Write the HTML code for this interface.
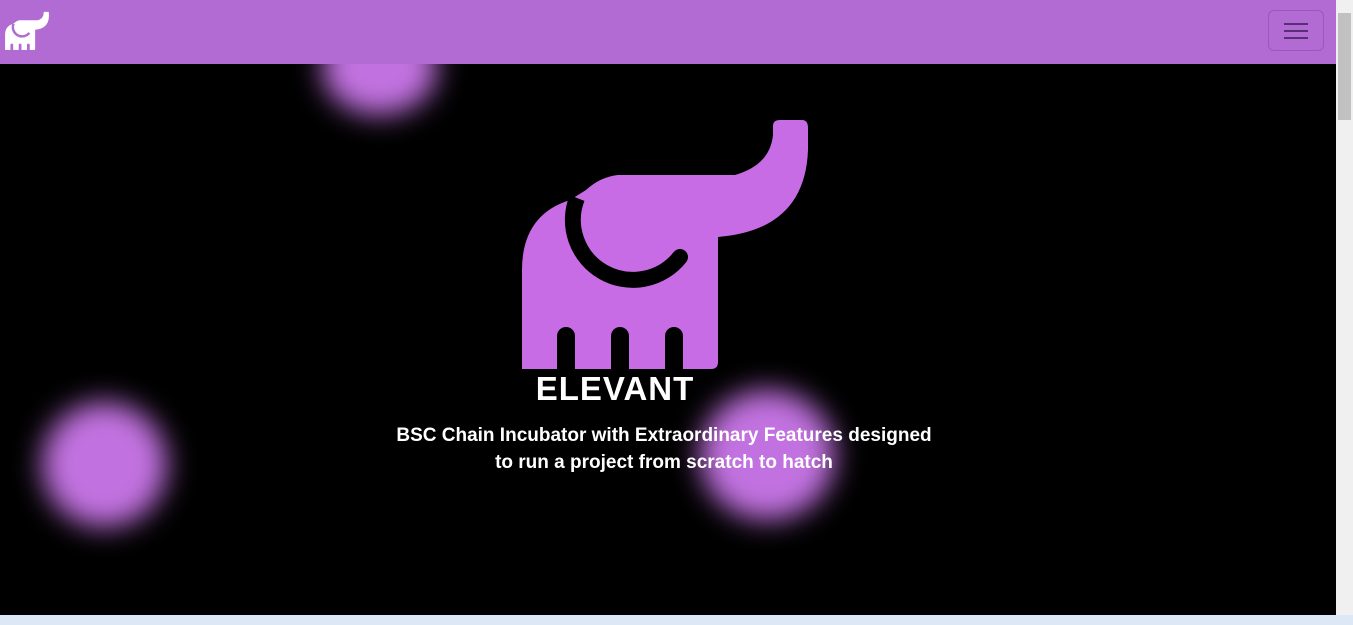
<!DOCTYPE html>
<html><head><style>
html,body{margin:0;padding:0;width:1353px;height:625px;overflow:hidden;background:#000;font-family:"Liberation Sans",sans-serif}
.nav{position:absolute;left:0;top:0;width:1336px;height:64px;background:#b36bd4;z-index:3}
.tog{position:absolute;left:1268px;top:10px;width:56px;height:41px;border:1px solid rgba(80,30,110,.25);border-radius:6px;box-sizing:border-box}
.tog i{position:absolute;left:15px;width:24px;height:2px;background:#5a2d78}
.glow{position:absolute;border-radius:50%;background:#c272e0;filter:blur(14px);z-index:1}
.sb{position:absolute;left:1336px;top:0;width:17px;height:615px;background:#f0f0f0}
.th{position:absolute;left:2px;top:13px;width:13px;height:107px;background:#c1c1c1}
.task{position:absolute;left:0;top:615px;width:1353px;height:10px;background:#dce8f5}
h1{position:absolute;left:0;width:1230px;top:370px;margin:0;text-align:center;color:#fff;font-size:33px;font-weight:900;letter-spacing:1px;z-index:2}
p{position:absolute;left:0;width:1328px;top:422px;margin:0;text-align:center;color:#fff;font-size:19px;font-weight:bold;line-height:27px;z-index:2}
</style></head><body>
<div class="glow" style="left:322px;top:20px;width:115px;height:95px"></div>
<div class="glow" style="left:42px;top:402px;width:125px;height:125px"></div>
<div class="glow" style="left:700px;top:390px;width:135px;height:130px"></div>
<div class="nav">
<svg width="46" height="40" viewBox="515 115 300 260" style="position:absolute;left:4px;top:11px">
<path d="M522,369 L522,270 Q522,215 570,200 L586,190 Q600,177 618,175 L735,175 Q770,165 773,135 L773,126 Q773,120 780,120 L802,120 Q808,120 808,128 L808,150 Q805,230 718,237 L718,362 Q718,369 711,369 Z" fill="#fff"/>
<path d="M577,198 A60,60 0 0 0 680,257" fill="none" stroke="#b36bd4" stroke-width="16"/>
<rect x="557" y="327" width="18" height="50" rx="9" fill="#b36bd4"/><rect x="611" y="327" width="18" height="50" rx="9" fill="#b36bd4"/><rect x="665" y="327" width="18" height="50" rx="9" fill="#b36bd4"/>
</svg>
<div class="tog"><i style="top:12px"></i><i style="top:19px"></i><i style="top:26px"></i></div>
</div>
<svg width="1336" height="615" style="position:absolute;left:0;top:0;z-index:2">
<path d="M522,369 L522,270 Q522,215 570,200 L586,190 Q600,177 618,175 L735,175 Q770,165 773,135 L773,126 Q773,120 780,120 L802,120 Q808,120 808,128 L808,150 Q805,230 718,237 L718,362 Q718,369 711,369 Z" fill="#c86ce6"/>
<path d="M577,198 A60,60 0 0 0 680,257" fill="none" stroke="#000" stroke-width="16"/>
<circle cx="680" cy="257" r="8" fill="#000"/>
<rect x="557" y="327" width="18" height="50" rx="9" fill="#000"/><rect x="611" y="327" width="18" height="50" rx="9" fill="#000"/><rect x="665" y="327" width="18" height="50" rx="9" fill="#000"/>
</svg>
<h1>ELEVANT</h1>
<p>BSC Chain Incubator with Extraordinary Features designed<br>to run a project from scratch to hatch</p>
<div class="sb"><div class="th"></div></div>
<div class="task"></div>
</body></html>
